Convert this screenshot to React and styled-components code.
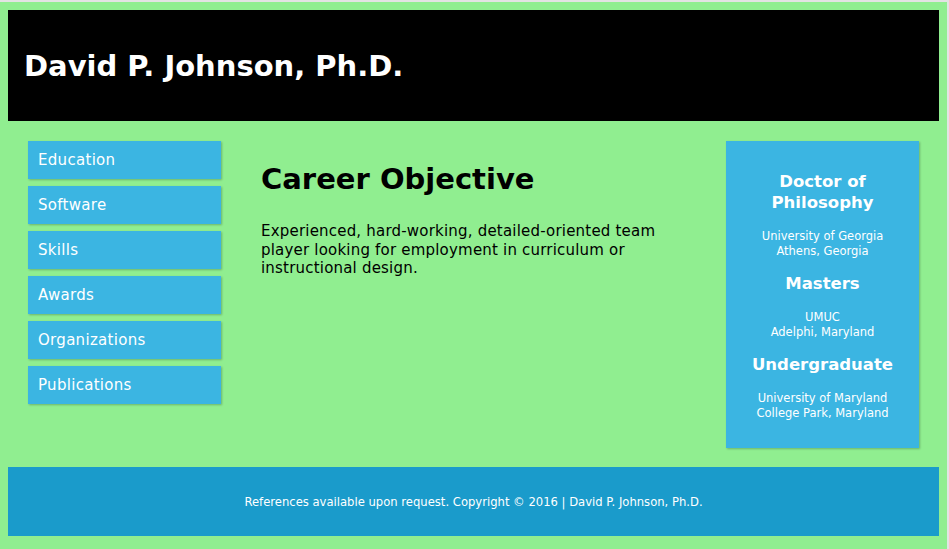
import React from 'react';
import styled, { createGlobalStyle } from 'styled-components';

const GlobalStyle = createGlobalStyle`
    html {
        background: #e3e3e3;
    }
    body {
        margin: 0;
        padding: 2px 2px 0 0;
        font-family: "DejaVu Sans", Verdana, sans-serif;
    }
`;

const Page = styled.div`
    background: #90ee90;
    padding: 8px 8px 13px 8px;
    min-height: 547px;
    box-sizing: border-box;
`;

const Header = styled.header`
    background: #000;
    height: 111px;
    display: flex;
    align-items: center;
    padding-left: 16px;
`;

const Title = styled.h1`
    margin: 0;
    color: #fff;
    font-size: 29px;
    font-weight: bold;
`;

const Main = styled.div`
    display: flex;
    align-items: flex-start;
    padding: 20px 20px 19px;
`;

const Nav = styled.nav`
    width: 193px;
    display: flex;
    flex-direction: column;
    gap: 7px;
`;

const NavItem = styled.a`
    display: flex;
    align-items: center;
    height: 38px;
    padding-left: 10px;
    background: #3bb5e2;
    color: #fff;
    font-size: 15px;
    letter-spacing: 0.3px;
    text-decoration: none;
    box-shadow: 1px 1px 2px rgba(0, 0, 0, 0.25);
`;

const Content = styled.section`
    flex: 1;
    padding: 0 40px;
`;

const Heading = styled.h2`
    margin: 21px 0 0;
    font-size: 29px;
    font-weight: bold;
    color: #000;
`;

const Text = styled.p`
    margin: 26px 0 0;
    font-size: 15px;
    letter-spacing: 0.2px;
    line-height: 18.5px;
    color: #000;
`;

const Aside = styled.aside`
    width: 193px;
    background: #3bb5e2;
    color: #fff;
    text-align: center;
    padding: 30px 6px 13px;
    box-sizing: border-box;
    box-shadow: 1px 1px 2px rgba(0, 0, 0, 0.25);
`;

const Degree = styled.h3`
    margin: 0;
    font-size: 16.5px;
    line-height: 21px;
    font-weight: bold;
`;

const School = styled.p`
    margin: 16px 0 14px;
    font-size: 11.5px;
    line-height: 15px;
`;

const Footer = styled.footer`
    height: 69px;
    background: #1a9bcb;
    color: #fff;
    display: flex;
    align-items: center;
    justify-content: center;
    font-size: 11.6px;
`;

const links = ['Education', 'Software', 'Skills', 'Awards', 'Organizations', 'Publications'];

const degrees = [
  { title: ['Doctor of', 'Philosophy'], school: 'University of Georgia', place: 'Athens, Georgia' },
  { title: ['Masters'], school: 'UMUC', place: 'Adelphi, Maryland' },
  { title: ['Undergraduate'], school: 'University of Maryland', place: 'College Park, Maryland' },
];

export default function App() {
  return (
    <Page>
      <GlobalStyle />
      <Header>
        <Title>David P. Johnson, Ph.D.</Title>
      </Header>
      <Main>
        <Nav>
          {links.map(l => (
            <NavItem key={l} href="#">{l}</NavItem>
          ))}
        </Nav>
        <Content>
          <Heading>Career Objective</Heading>
          <Text>
            Experienced, hard-working, detailed-oriented team player looking for employment in curriculum or instructional design.
          </Text>
        </Content>
        <Aside>
          {degrees.map(d => (
            <div key={d.school}>
              <Degree>
                {d.title.map((t, j) => (
                  <React.Fragment key={t}>{j > 0 && <br />}{t}</React.Fragment>
                ))}
              </Degree>
              <School>
                {d.school}<br />{d.place}
              </School>
            </div>
          ))}
        </Aside>
      </Main>
      <Footer>References available upon request. Copyright © 2016 | David P. Johnson, Ph.D.</Footer>
    </Page>
  );
}
